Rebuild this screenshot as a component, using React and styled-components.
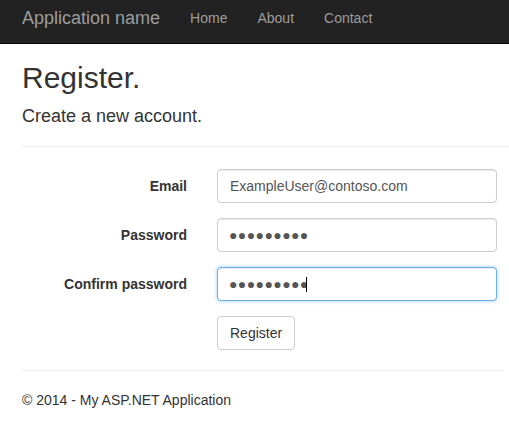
import React from "react";
import styled, { createGlobalStyle, css } from "styled-components";

const Global = createGlobalStyle`
  html, body { margin: 0; padding: 0; background: #fff; }
  body {
    font-family: "Liberation Sans", Arial, sans-serif;
    font-size: 14px;
    line-height: 20px;
    color: #333;
    overflow: hidden;
  }
  * { box-sizing: border-box; }
`;

const Navbar = styled.nav`
  height: 44px;
  background: #222;
  border-bottom: 1px solid #080808;
  display: flex;
  align-items: center;
  padding: 0 0 0 22px;
`;

const Brand = styled.a`
  font-size: 18px;
  line-height: 20px;
  color: #9d9d9d;
  text-decoration: none;
  margin-right: 15px;
  padding-bottom: 7px;
`;

const NavList = styled.ul`
  display: flex;
  list-style: none;
  margin: 0;
  padding: 0 0 7px 0;
`;

const NavLink = styled.a`
  display: block;
  padding: 0 15px;
  color: #9d9d9d;
  text-decoration: none;
  font-size: 14px;
  line-height: 20px;
`;

const Main = styled.main`
  padding: 0 0 0 22px;
`;

const Title = styled.h2`
  font-size: 30px;
  line-height: 33px;
  font-weight: 500;
  margin: 17px 0 0 0;
`;

const Subtitle = styled.h4`
  font-size: 18px;
  line-height: 20px;
  font-weight: 500;
  margin: 12px 0 0 0;
`;

const Rule = styled.hr`
  border: 0;
  border-top: 1px solid #eee;
  margin: ${(p) => p.$top}px ${(p) => p.$right || 0}px 0 0;
`;

const Form = styled.form`
  display: grid;
  grid-template-columns: 165px 280px;
  column-gap: 30px;
  row-gap: 15px;
  margin-top: 22px;
  align-items: center;
`;

const Label = styled.label`
  font-weight: bold;
  text-align: right;
  font-size: 14px;
  line-height: 20px;
`;

const Field = styled.div`
  position: relative;
  height: 34px;
`;

const Input = styled.input`
  display: block;
  width: 100%;
  height: 34px;
  padding: 6px 12px;
  font-family: "Liberation Sans", Arial, sans-serif;
  font-size: 14px;
  line-height: 20px;
  color: #555;
  background: #fff;
  border: 1px solid #ccc;
  border-radius: 4px;
  box-shadow: inset 0 1px 1px rgba(0, 0, 0, 0.075);
  outline: none;
  ${(p) =>
    p.$dots &&
    css`
      letter-spacing: 0.4px;
      padding-left: 11px;
    `}
  ${(p) =>
    p.$focused &&
    css`
      border-color: #66afe9;
      box-shadow: inset 0 1px 1px rgba(0, 0, 0, 0.075),
        0 0 4px rgba(102, 175, 233, 0.6);
    `}
`;

const Caret = styled.span`
  position: absolute;
  top: 10px;
  left: 89px;
  width: 1px;
  height: 15px;
  background: #000;
`;

const Spacer = styled.div``;

const Button = styled.button`
  justify-self: start;
  height: 34px;
  padding: 6px 12px;
  font-family: "Liberation Sans", Arial, sans-serif;
  font-size: 14px;
  line-height: 20px;
  color: #333;
  background: #fff;
  border: 1px solid #ccc;
  border-radius: 4px;
`;

const Footer = styled.footer`
  font-size: 14px;
  line-height: 20px;
  margin-top: 19px;
`;

const DOTS = "\u25CF".repeat(9);

export default function App() {
  return (
    <>
      <Global />
      <Navbar>
        <Brand href="#">Application name</Brand>
        <NavList>
          <li><NavLink href="#">Home</NavLink></li>
          <li><NavLink href="#">About</NavLink></li>
          <li><NavLink href="#">Contact</NavLink></li>
        </NavList>
      </Navbar>
      <Main>
        <Title>Register.</Title>
        <Subtitle>Create a new account.</Subtitle>
        <Rule $top={20} />
        <Form onSubmit={(e) => e.preventDefault()}>
          <Label>Email</Label>
          <Field>
            <Input type="text" defaultValue="ExampleUser@contoso.com" />
          </Field>
          <Label>Password</Label>
          <Field>
            <Input type="text" $dots readOnly value={DOTS} />
          </Field>
          <Label>Confirm password</Label>
          <Field>
            <Input type="text" $dots $focused readOnly value={DOTS} />
            <Caret />
          </Field>
          <Spacer />
          <Button type="submit">Register</Button>
        </Form>
        <Rule $top={20} $right={5} />
        <Footer>© 2014 - My ASP.NET Application</Footer>
      </Main>
    </>
  );
}
